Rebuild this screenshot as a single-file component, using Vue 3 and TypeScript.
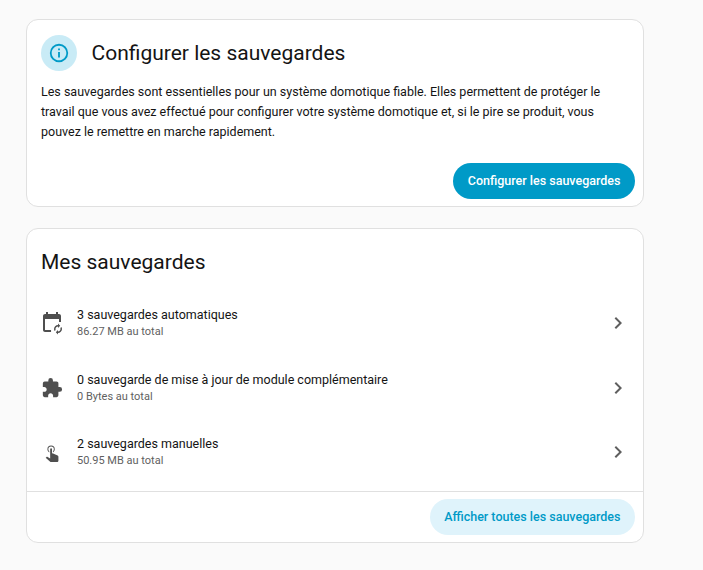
<script setup lang="ts">
interface Row { title: string; sub: string; icon: string; kind: string }
const calendarSync =
  'M6 1V3H5C3.9 3 3 3.9 3 5V19C3 20.1 3.9 21 5 21H11.1C11 20.3 11 19.7 11.1 19H5V8H19V11.1C19.7 11 20.3 11 21 11.1V5C21 3.9 20.1 3 19 3H18V1H16V3H8V1H6ZM18 12.5V14C15.8 14 14 15.8 14 18C14 18.8 14.2 19.5 14.6 20.1L15.7 19C15.5 18.7 15.5 18.3 15.5 18C15.5 16.6 16.6 15.5 18 15.5V17L20.2 14.8L18 12.5ZM21.4 15.9L20.3 17C20.5 17.3 20.5 17.7 20.5 18C20.5 19.4 19.4 20.5 18 20.5V19L15.8 21.2L18 23.5V22C20.2 22 22 20.2 22 18C22 17.2 21.8 16.5 21.4 15.9Z'
const puzzle =
  'M20.5,11H19V7C19,5.89 18.1,5 17,5H13V3.5A2.5,2.5 0 0,0 10.5,1A2.5,2.5 0 0,0 8,3.5V5H4A2,2 0 0,0 2,7V10.8H3.5C5,10.8 6.2,12 6.2,13.5C6.2,15 5,16.2 3.5,16.2H2V20A2,2 0 0,0 4,22H7.8V20.5C7.8,19 9,17.8 10.5,17.8C12,17.8 13.2,19 13.2,20.5V22H17A2,2 0 0,0 19,20V16H20.5A2.5,2.5 0 0,0 23,13.5A2.5,2.5 0 0,0 20.5,11Z'
const tap =
  'M10,9A1,1 0 0,1 11,8A1,1 0 0,1 12,9V13.47L13.21,13.6L18.15,15.79C18.68,16.03 19,16.56 19,17.14V21.5C18.97,22.32 18.32,22.97 17.5,23H11C10.62,23 10.26,22.85 10,22.57L5.1,18.37L5.84,17.6C6.03,17.39 6.3,17.28 6.58,17.28H6.8L10,19V9M11,5A4,4 0 0,1 15,9C15,10.5 14.2,11.77 13,12.46V11.24C13.61,10.69 14,9.89 14,9A3,3 0 0,0 11,6A3,3 0 0,0 8,9C8,9.89 8.39,10.69 9,11.24V12.46C7.8,11.77 7,10.5 7,9A4,4 0 0,1 11,5Z'
const rows: Row[] = [
  { title: '3 sauvegardes automatiques', sub: '86.27 MB au total', icon: calendarSync, kind: 'big' },
  { title: '0 sauvegarde de mise à jour de module complémentaire', sub: '0 Bytes au total', icon: puzzle, kind: 'small' },
  { title: '2 sauvegardes manuelles', sub: '50.95 MB au total', icon: tap, kind: 'small' },
]
</script>

<template>
  <div class="page">
    <section class="card">
      <div class="head">
        <span class="badge">
          <svg viewBox="0 0 24 24"><path d="M11,9H13V7H11M12,20C7.59,20 4,16.41 4,12C4,7.59 7.59,4 12,4C16.41,4 20,7.59 20,12C20,16.41 16.41,20 12,20M12,2A10,10 0 0,0 2,12A10,10 0 0,0 12,22A10,10 0 0,0 22,12A10,10 0 0,0 12,2M11,17H13V11H11V17Z" /></svg>
        </span>
        <h2>Configurer les sauvegardes</h2>
      </div>
      <p class="desc">Les sauvegardes sont essentielles pour un système domotique fiable. Elles permettent de protéger le travail que vous avez effectué pour configurer votre système domotique et, si le pire se produit, vous pouvez le remettre en marche rapidement.</p>
      <div class="actions first">
        <button class="btn solid">Configurer les sauvegardes</button>
      </div>
    </section>

    <section class="card">
      <h2 class="title2">Mes sauvegardes</h2>
      <ul class="list">
        <li v-for="r in rows" :key="r.title" class="row">
          <svg class="ico" :class="r.kind" viewBox="0 0 24 24"><path :d="r.icon" /></svg>
          <div class="txt">
            <div class="t">{{ r.title }}</div>
            <div class="s">{{ r.sub }}</div>
          </div>
          <svg class="chev" viewBox="0 0 24 24" width="24" height="24"><path d="M8.59,16.58L13.17,12L8.59,7.41L10,6L16,12L10,18L8.59,16.58Z" /></svg>
        </li>
      </ul>
      <div class="actions second">
        <button class="btn soft">Afficher toutes les sauvegardes</button>
      </div>
    </section>
  </div>
</template>

<style>
html, body { margin: 0; background: #fafafa; }
</style>

<style scoped>
.page {
  width: 618px;
  padding: 19px 0 0 26px;
  display: flex;
  flex-direction: column;
  gap: 21px;
  font-family: Roboto, sans-serif;
  color: #141414;
}
.card {
  background: #fff;
  border: 1px solid #e0e0e0;
  border-radius: 12px;
  box-sizing: border-box;
  width: 618px;
}
.head {
  display: flex;
  align-items: center;
  gap: 14.5px;
  padding: 15px 14px 0;
}
.badge {
  width: 36px;
  height: 36px;
  border-radius: 50%;
  background: #c9ebf6;
  display: flex;
  align-items: center;
  justify-content: center;
  flex: none;
}
.badge svg { fill: #009ac7; width: 22px; height: 22px; }
h2 {
  margin: 0;
  font-size: 21px;
  font-weight: 400;
  line-height: 28px;
}
.desc {
  margin: 11px 14px 0;
  font-size: 12.5px;
  line-height: 20px;
}
.actions {
  display: flex;
  justify-content: flex-end;
  padding: 8px 8px 7px;
}
.first { padding-top: 21px; }
.btn {
  height: 36px;
  border: 0;
  border-radius: 18px;
  padding: 0 14.5px;
  font: 500 12.5px/36px Roboto, sans-serif;
}
.solid { background: #009ac7; color: #fff; }
.soft { background: #dff3fb; color: #009ac7; }
.title2 {
  padding: 19px 14px 0;
}
.list {
  list-style: none;
  margin: 0;
  padding: 15px 0 6px;
}
.row {
  height: 64.5px;
  display: flex;
  align-items: center;
  padding: 0 13px 0 14px;
}
.ico { fill: #4f4f4f; flex: none; }
.big { width: 24px; height: 24px; margin: 0 1px 0 -1px; }
.small { width: 22px; height: 22px; margin: 0 2px 0 0; }
.txt { margin-left: 12px; flex: 1; }
.t { font-size: 12.5px; line-height: 18px; color: #141414; }
.s { font-size: 11px; line-height: 16px; color: #5f5f5f; }
.chev { fill: #5f5f5f; flex: none; }
.second { border-top: 1px solid #e0e0e0; padding-top: 7px; }
</style>
